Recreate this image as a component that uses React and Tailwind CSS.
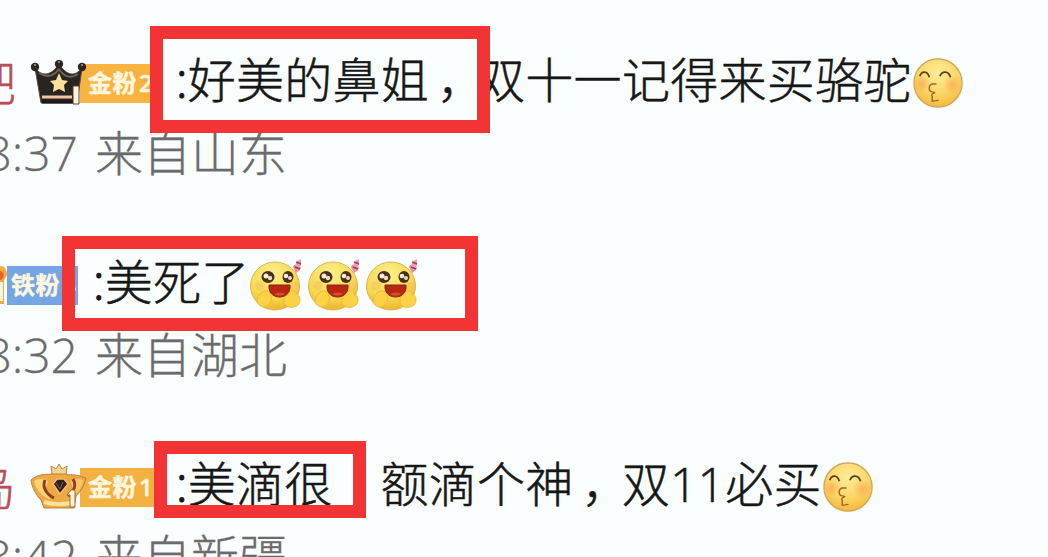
const KissEmoji = () => (
  <svg className="h-[52px] w-[52px] shrink-0" viewBox="0 0 54 54" fill="none">
    <defs>
      <radialGradient id="kiss-face" cx="50%" cy="30%" r="70%">
        <stop offset="0" stopColor="#fdec98" />
        <stop offset="0.6" stopColor="#fbd768" />
        <stop offset="1" stopColor="#f5b93f" />
      </radialGradient>
      <radialGradient id="kiss-blush">
        <stop offset="0" stopColor="#f79a4c" stopOpacity="0.6" />
        <stop offset="1" stopColor="#f79a4c" stopOpacity="0" />
      </radialGradient>
    </defs>
    <circle cx="27" cy="27" r="26.3" fill="#fff0c4" />
    <circle cx="27" cy="27" r="25" fill="url(#kiss-face)" stroke="#c5a568" strokeWidth="1.2" />
    <circle cx="10" cy="28" r="9" fill="url(#kiss-blush)" />
    <circle cx="42" cy="29" r="10" fill="url(#kiss-blush)" />
    <path d="M8 20c2-6 8-6 10 1M29 20c2-6 9-6 11 1" stroke="#5d4116" strokeWidth="1.8" />
    <path
      d="M25 28h-4c-4 1-4 7-1 8l4 1c-4 1-4 3-3 4v5l6-1"
      stroke="#9a6420"
      strokeWidth="1.4"
      strokeLinecap="round"
    />
  </svg>
);

const LoveEmoji = () => (
  <svg className="h-[54px] w-[58px] shrink-0" viewBox="0 0 58 54" fill="none">
    <defs>
      <radialGradient id="love-face" cx="45%" cy="25%" r="75%">
        <stop offset="0" stopColor="#fbf08d" />
        <stop offset="0.65" stopColor="#f8d94f" />
        <stop offset="1" stopColor="#eeb52f" />
      </radialGradient>
    </defs>
    <ellipse cx="25" cy="28" rx="24.5" ry="24" fill="url(#love-face)" stroke="#d8b75e" />
    <circle cx="10" cy="28" r="5" fill="#f9b65f" opacity="0.4" />
    <circle cx="44" cy="28" r="4" fill="#f9b65f" opacity="0.4" />
    <ellipse cx="18" cy="19" rx="6.5" ry="6" fill="#493019" />
    <ellipse cx="38" cy="19" rx="5.5" ry="6" fill="#493019" />
    <circle cx="16" cy="18" r="2.5" fill="#f8ecdf" />
    <circle cx="20" cy="20" r="2.2" fill="#f1d9c4" />
    <circle cx="36" cy="18" r="2.3" fill="#f8ecdf" />
    <circle cx="40" cy="20" r="2" fill="#f1d9c4" />
    <path d="M19 27h21v3c-1 12-20 12-21 0z" fill="#b92612" stroke="#7f2a12" />
    <path d="M24 36c4-2 8-2 11 0-3 2-8 2-11 0z" fill="#dc4a32" />
    <path
      d="M10 36c4-5 10-4 11 2 2 5-2 11-8 11-6-1-8-8-3-13zM38 37c1-5 7-6 8-1 5 1 5 8 2 11-5 4-12 3-14-2-1-4 1-7 4-8z"
      fill="#fbd345"
      stroke="#eeb137"
      strokeWidth="0.8"
    />
    <path d="M43 9c1-3 3-3 4-1 3-1 5 1 3 4l-4 3z" fill="#ed9099" />
    <path d="M45 9l2-6 4-2v6l-3 5z" fill="#efa0ae" />
    <path d="M46 4l5 2M45 9l5 2" stroke="#934261" strokeWidth="1.8" />
  </svg>
);

const BlackCrown = () => (
  <svg className="relative h-[46px] w-[58px] shrink-0" viewBox="0 0 58 46" fill="none">
    <path
      d="M5 8c7 9 16 8 24-4 8 12 16 13 23 4l-5 35H11z"
      fill="#282421"
      stroke="#604c3b"
    />
    <path d="M9 13c8 5 15 3 20-4 5 8 12 10 19 5" stroke="#6b6259" strokeWidth="2" />
    <circle cx="5" cy="7" r="4.2" fill="#2d2521" />
    <circle cx="29" cy="4" r="4.2" fill="#2d2521" />
    <circle cx="52" cy="7" r="4.2" fill="#2d2521" />
    <path d="M4 5h2M28 2h2M51 5h2" stroke="#bd9c80" strokeWidth="1.5" />
    <path d="M29 13l3 7 6 1-4 4 1 7-6-3-6 3 1-7-4-4 6-1z" fill="#f9dfa0" />
    <path d="M12 37h30" stroke="#f4c5a0" strokeWidth="3" />
    <path d="M12 42h35" stroke="#191614" strokeWidth="3" />
    <path d="M43 26h6v18h-6z" fill="#fff5df" stroke="#54402f" />
  </svg>
);

const GoldCrown = () => (
  <svg className="relative h-[46px] w-[58px] shrink-0" viewBox="0 0 58 46" fill="none">
    <path
      d="M1 16c8-7 15-5 20-6 6-5 12-4 17 1 6-1 12 1 18 3-2 9-7 15-10 18l-2 12H14l-3-8C6 31 2 24 1 16z"
      fill="#eea943"
      stroke="#b98049"
    />
    <path d="M4 17c6-3 11-2 14 0l-3 9 6 10C12 32 7 28 4 17z" fill="#ffd477" />
    <path d="M41 17c5-3 8-2 12-1-1 7-4 12-9 15z" fill="#ffc764" />
    <path d="M15 16c-3 7 1 14 9 18M43 15c4 7 1 12-5 17" stroke="#8e3c23" strokeWidth="3" />
    <path d="M22 10l-1-8 5 3 3-5 3 5 5-3-1 8z" fill="#f7d590" stroke="#ba8447" />
    <path d="M23 20l4-5h7l4 5-8 10z" fill="#34211d" stroke="#efbd83" strokeWidth="1.5" />
    <path d="M26 19l4 6 3-7" stroke="#796156" />
    <path d="M14 38c10 3 20 3 31 0" stroke="#ffe19b" strokeWidth="4" />
    <path d="M41 26h4v17h-5V31h-3z" fill="#fff2d1" stroke="#9c6a3e" />
  </svg>
);

const FanBadge = ({ label, level, className }) => (
  <span
    className={`flex h-[39px] shrink-0 items-center gap-0.5 text-[24px] font-bold tracking-[0.5px] text-[#fff6df] ${className}`}
  >
    {label}
    <span className="font-semibold">{level}</span>
  </span>
);

// User name, only its last character reaches into view
const Name = ({ children }) => (
  <span className="flex w-[30px] shrink-0 justify-end pr-[14px] text-[#bd4c59]">
    {children}
  </span>
);

const Words = ({ children, className = "" }) => (
  <span className={`pb-[6px] ${className}`}>{children}</span>
);

const Colon = () => <span className="[-webkit-text-stroke:1.3px]">:</span>;

const Comment = ({ header, time, place }) => (
  <article className="h-[202px] shrink-0 whitespace-nowrap">
    <div className="flex h-[68px] items-center text-[48px] tracking-[0.27px] text-[#171717] [-webkit-text-stroke:0.5px]">
      {header}
    </div>
    <div className="flex h-[72px] items-center gap-[17px] text-[48px] text-[#6b6b6b] [-webkit-text-stroke:0.3px]">
      <span className="flex w-[78px] shrink-0 justify-end">{time}</span>
      <span>{place}</span>
    </div>
  </article>
);

const Highlight = ({ className }) => (
  <div className={`absolute border-[13px] border-[#f23434] ${className}`} />
);

const App = () => {
  return (
    <main className="relative h-[557px] w-[1048px] overflow-hidden bg-[#fafefe] pt-[49px] font-['Open_Sans','Noto_Sans_CJK_SC',sans-serif] font-light leading-none">
      <Comment
        header={
          <>
            <Name>吧</Name>
            <BlackCrown />
            <div className="-ml-2 w-[86px] shrink-0">
              <FanBadge label="金粉" level="2" className="w-[80px] bg-[#f8b440] pl-2" />
            </div>
            <Words className="pl-[10px]">
              <Colon />
              好美的鼻姐
            </Words>
            <Words className="w-[48px] pl-2">，</Words>
            <Words>双十一记得来买骆驼</Words>
            <KissEmoji />
          </>
        }
        time="8:37"
        place="来自山东"
      />
      <Comment
        header={
          <>
            <svg className="h-[38px] w-[7px] shrink-0" viewBox="0 0 7 38">
              <path d="M0 0c5 0 7 4 7 9l-3 5v24H0z" fill="#f3ab3f" />
              <path d="M0 5c5 1 5 6 1 9H0z" fill="#e76431" />
              <path d="M0 16h3v19H0z" fill="#fff4dc" />
            </svg>
            <FanBadge label="铁粉" level="4" className="w-[71px] bg-[#75a5e2] pl-1" />
            <Words className="pl-[15px]">
              <Colon />
              美死了
            </Words>
            <LoveEmoji />
            <LoveEmoji />
            <LoveEmoji />
          </>
        }
        time="8:32"
        place="来自湖北"
      />
      <Comment
        header={
          <>
            <Name>岛</Name>
            <GoldCrown />
            <div className="-ml-2 w-[86px] shrink-0">
              <FanBadge label="金粉" level="1" className="w-[80px] bg-[#f3b142] pl-2" />
            </div>
            <Words className="pl-[10px]">
              <Colon />
              美滴很
            </Words>
            <Words className="pl-[48px]">额滴个神</Words>
            <Words className="w-[48px] pl-2">，</Words>
            <Words>双11必买</Words>
            <KissEmoji />
          </>
        }
        time="8:42"
        place="来自新疆"
      />
      <Highlight className="top-[26px] left-[150px] h-[107px] w-[340px]" />
      <Highlight className="top-[236px] left-[62px] h-[95px] w-[416px]" />
      <Highlight className="top-[441px] left-[154px] h-[77px] w-[212px]" />
    </main>
  );
};

export default App;
